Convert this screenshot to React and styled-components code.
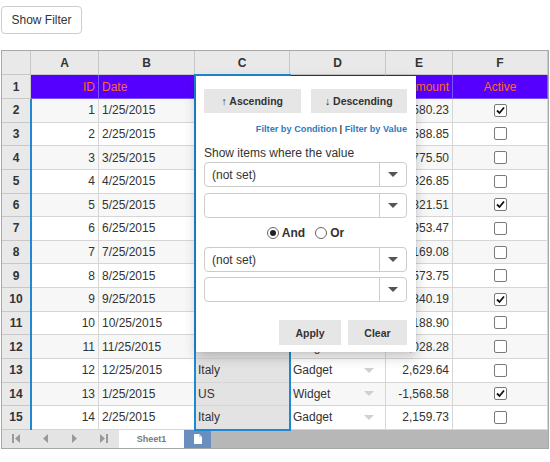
import React from 'react';
import styled, { createGlobalStyle } from 'styled-components';

const GlobalStyle = createGlobalStyle`
  body {
    margin: 0;
    background: #fff;
    color: #333;
    font-family: "Liberation Sans", Arial, sans-serif;
  }
`;

const Page = styled.div`
  padding: 6px 1px 0;
`;

const FilterButton = styled.button`
  height: 28px;
  width: 81px;
  padding: 0;
  border: 1px solid #ccc;
  border-radius: 4px;
  background: #fff;
  color: #333;
  font: 12px "Liberation Sans", Arial, sans-serif;
`;

const Sheet = styled.div`
  position: relative;
  margin-top: 16px;
  width: 548px;
  box-sizing: border-box;
  border: 1px solid #a8a8a8;
  overflow: hidden;
`;

const Grid = styled.div`
  display: grid;
  grid-template-columns: 29px 68px 96px 95px 96px 67px 95px;
  grid-template-rows: 24px 24px repeat(14, 23.64px);
`;

const Cell = styled.div`
  box-sizing: border-box;
  display: flex;
  align-items: center;
  justify-content: ${p => p.$align || 'flex-start'};
  padding: 0 3px;
  border-right: 1px solid ${p => p.$line || '#d6d6d6'};
  border-bottom: 1px solid ${p => p.$line || '#d6d6d6'};
  background: ${p => p.$bg || '#fff'};
  color: ${p => p.$color || '#333'};
  font-size: 12px;
  font-weight: ${p => (p.$bold ? 'bold' : 'normal')};
  white-space: nowrap;
  overflow: hidden;
`;

const HeadCell = styled(Cell).attrs({ $bg: '#e9e9e9', $bold: true, $line: '#c8c8c8' })``;

const ProductText = styled.span`
  flex: 1;
`;

const CellArrow = styled.span`
  width: 0;
  height: 0;
  margin-right: 8px;
  border-left: 5px solid transparent;
  border-right: 5px solid transparent;
  border-top: 5px solid #d0d0d0;
`;

const Box = styled.span`
  display: inline-flex;
  align-items: center;
  justify-content: center;
  width: 13px;
  height: 13px;
  box-sizing: border-box;
  border: 1px solid #7a7a7a;
  border-radius: 2px;
  background: #fff;
`;

const Selection = styled.div`
  position: absolute;
  left: 192px;
  top: 23px;
  width: 97px;
  height: 357px;
  box-sizing: border-box;
  border: 2px solid #1f88d2;
  pointer-events: none;
`;

const FrozenLine = styled.div`
  position: absolute;
  left: 28px;
  top: 48px;
  width: 2px;
  height: 331px;
  background: #1f88d2;
`;

const Panel = styled.div`
  position: absolute;
  left: 194px;
  top: 25px;
  width: 220px;
  height: 276px;
  box-sizing: border-box;
  padding: 13px 9px 0 8px;
  background: #fff;
  box-shadow: 0 5px 12px rgba(0, 0, 0, 0.2), 0 0 2px rgba(0, 0, 0, 0.08);
  display: flex;
  flex-direction: column;
`;

const SortRow = styled.div`
  display: flex;
  gap: 10px;
`;

const GrayButton = styled.button`
  flex: ${p => p.$flex || 'none'};
  width: ${p => p.$w || 'auto'};
  height: ${p => p.$h || '24px'};
  border: none;
  background: #e6e6e6;
  color: #333;
  font: bold 10.5px "Liberation Sans", Arial, sans-serif;
  padding: 0;
`;

const Links = styled.div`
  margin-top: 10px;
  text-align: right;
  font-size: 9.2px;
  font-weight: bold;
  line-height: 13px;
  color: #333;
`;

const LinkText = styled.span`
  color: #2f7bc0;
`;

const Caption = styled.div`
  margin-top: 10px;
  font-size: 12px;
  line-height: 14px;
  color: #333;
`;

const Select = styled.div`
  display: flex;
  height: 25px;
  margin-top: ${p => p.$top || 0}px;
  box-sizing: border-box;
  border: 1px solid #ccc;
  border-radius: 4px;
  font-size: 12px;
  color: #333;
`;

const SelectText = styled.div`
  flex: 1;
  display: flex;
  align-items: center;
  padding-left: 7px;
`;

const SelectToggle = styled.div`
  width: 26px;
  display: flex;
  align-items: center;
  justify-content: center;
  border-left: 1px solid #ccc;
  &::after {
    content: '';
    border-left: 5px solid transparent;
    border-right: 5px solid transparent;
    border-top: 5px solid #555;
  }
`;

const RadioRow = styled.div`
  height: 29px;
  display: flex;
  align-items: center;
  justify-content: center;
  gap: 10px;
  font-size: 12px;
  font-weight: bold;
`;

const RadioLabel = styled.label`
  display: flex;
  align-items: center;
  gap: 3px;
`;

const RadioDot = styled.span`
  width: 12px;
  height: 12px;
  box-sizing: border-box;
  border: 1px solid #666;
  border-radius: 50%;
  display: flex;
  align-items: center;
  justify-content: center;
  &::after {
    content: '';
    width: 6px;
    height: 6px;
    border-radius: 50%;
    background: ${p => (p.$on ? '#222' : 'transparent')};
  }
`;

const ActionRow = styled.div`
  margin-top: 18px;
  display: flex;
  justify-content: flex-end;
  gap: 7px;
`;

const TabBar = styled.div`
  display: flex;
  height: 18px;
  background: #b7b7b7;
`;

const NavArea = styled.div`
  display: flex;
  width: 117px;
  background: #e4e4e4;
`;

const NavBtn = styled.div`
  width: 29px;
  display: flex;
  align-items: center;
  justify-content: center;
`;

const SheetTab = styled.div`
  width: 65px;
  display: flex;
  align-items: center;
  justify-content: center;
  background: #fff;
  color: #7a7a7a;
  font-size: 9px;
  font-weight: bold;
`;

const NewSheet = styled.div`
  width: 27px;
  display: flex;
  align-items: center;
  justify-content: center;
  background: #6a8ebd;
`;

const rows = [
  [1, '1/25/2015', 'US', 'Widget', '3,580.23', true],
  [2, '2/25/2015', 'Germany', 'Gadget', '2,588.85', false],
  [3, '3/25/2015', 'UK', 'Doohickey', '1,775.50', false],
  [4, '4/25/2015', 'Japan', 'Widget', '4,826.85', false],
  [5, '5/25/2015', 'Italy', 'Gadget', '3,821.51', true],
  [6, '6/25/2015', 'Greece', 'Doohickey', '2,953.47', false],
  [7, '7/25/2015', 'US', 'Widget', '1,169.08', false],
  [8, '8/25/2015', 'Germany', 'Gadget', '4,573.75', false],
  [9, '9/25/2015', 'UK', 'Widget', '2,840.19', true],
  [10, '10/25/2015', 'Japan', 'Doohickey', '3,188.90', false],
  [11, '11/25/2015', 'Greece', 'Widget', '1,028.28', false],
  [12, '12/25/2015', 'Italy', 'Gadget', '2,629.64', false],
  [13, '1/25/2015', 'US', 'Widget', '-1,568.58', true],
  [14, '2/25/2015', 'Italy', 'Gadget', '2,159.73', false],
];

const Check = () => (
  <svg width="9" height="9" viewBox="0 0 9 9">
    <path d="M1 4.5 L3.5 7 L8 1.5" fill="none" stroke="#111" strokeWidth="1.8" />
  </svg>
);

const NavIcon = ({ dir, bar }) => (
  <svg width="9" height="9" viewBox="0 0 9 9">
    {dir === 'left' ? (
      <path d={bar ? 'M8 0 L3 4.5 L8 9 Z' : 'M7 0 L2 4.5 L7 9 Z'} fill="#9a9a9a" />
    ) : (
      <path d={bar ? 'M1 0 L6 4.5 L1 9 Z' : 'M2 0 L7 4.5 L2 9 Z'} fill="#9a9a9a" />
    )}
    {bar && <rect x={dir === 'left' ? 0 : 7} y="0" width="2" height="9" fill="#9a9a9a" />}
  </svg>
);

const DocIcon = () => (
  <svg width="8" height="10" viewBox="0 0 8 10">
    <path d="M0 0 H5 L8 3 V10 H0 Z" fill="#fff" />
    <path d="M5 0 V3 H8" fill="#c8d6ea" />
  </svg>
);

const App = () => {
  const purple = { $bg: '#5500ff', $color: '#ff6a1a', $line: '#7a55ff' };

  return (
    <Page>
      <GlobalStyle />
      <FilterButton>Show Filter</FilterButton>
      <Sheet>
        <Grid>
          <HeadCell />
          {['A', 'B', 'C', 'D', 'E', 'F'].map(c => (
            <HeadCell key={c} $align="center">{c}</HeadCell>
          ))}

          <HeadCell $align="center">1</HeadCell>
          <Cell {...purple} $align="flex-end">ID</Cell>
          <Cell {...purple}>Date</Cell>
          <Cell {...purple}>Country</Cell>
          <Cell {...purple}>Product</Cell>
          <Cell {...purple} $align="flex-end">Amount</Cell>
          <Cell {...purple} $align="center">Active</Cell>

          {rows.map(([id, date, country, product, amount, active], i) => {
            const bg = i % 2 === 0 ? '#f7f7f7' : '#fff';
            return (
              <React.Fragment key={id}>
                <HeadCell $align="center">{i + 2}</HeadCell>
                <Cell $bg={bg} $align="flex-end">{id}</Cell>
                <Cell $bg={bg}>{date}</Cell>
                <Cell $bg="#e3e3e3">{country}</Cell>
                <Cell $bg={bg}>
                  <ProductText>{product}</ProductText>
                  <CellArrow />
                </Cell>
                <Cell $bg={bg} $align="flex-end">{amount}</Cell>
                <Cell $bg={bg} $align="center">
                  <Box>{active && <Check />}</Box>
                </Cell>
              </React.Fragment>
            );
          })}
        </Grid>

        <TabBar>
          <NavArea>
            <NavBtn><NavIcon dir="left" bar /></NavBtn>
            <NavBtn><NavIcon dir="left" /></NavBtn>
            <NavBtn><NavIcon dir="right" /></NavBtn>
            <NavBtn><NavIcon dir="right" bar /></NavBtn>
          </NavArea>
          <SheetTab>Sheet1</SheetTab>
          <NewSheet><DocIcon /></NewSheet>
        </TabBar>

        <FrozenLine />
        <Selection />

        <Panel>
          <SortRow>
            <GrayButton $flex="1">↑ Ascending</GrayButton>
            <GrayButton $flex="1">↓ Descending</GrayButton>
          </SortRow>
          <Links>
            <LinkText>Filter by Condition</LinkText> | <LinkText>Filter by Value</LinkText>
          </Links>
          <Caption>Show items where the value</Caption>
          <Select $top={2}>
            <SelectText>(not set)</SelectText>
            <SelectToggle />
          </Select>
          <Select $top={6}>
            <SelectText />
            <SelectToggle />
          </Select>
          <RadioRow>
            <RadioLabel><RadioDot $on />And</RadioLabel>
            <RadioLabel><RadioDot />Or</RadioLabel>
          </RadioRow>
          <Select>
            <SelectText>(not set)</SelectText>
            <SelectToggle />
          </Select>
          <Select $top={5}>
            <SelectText />
            <SelectToggle />
          </Select>
          <ActionRow>
            <GrayButton $w="62px" $h="25px">Apply</GrayButton>
            <GrayButton $w="59px" $h="25px">Clear</GrayButton>
          </ActionRow>
        </Panel>
      </Sheet>
    </Page>
  );
};

export default App;
